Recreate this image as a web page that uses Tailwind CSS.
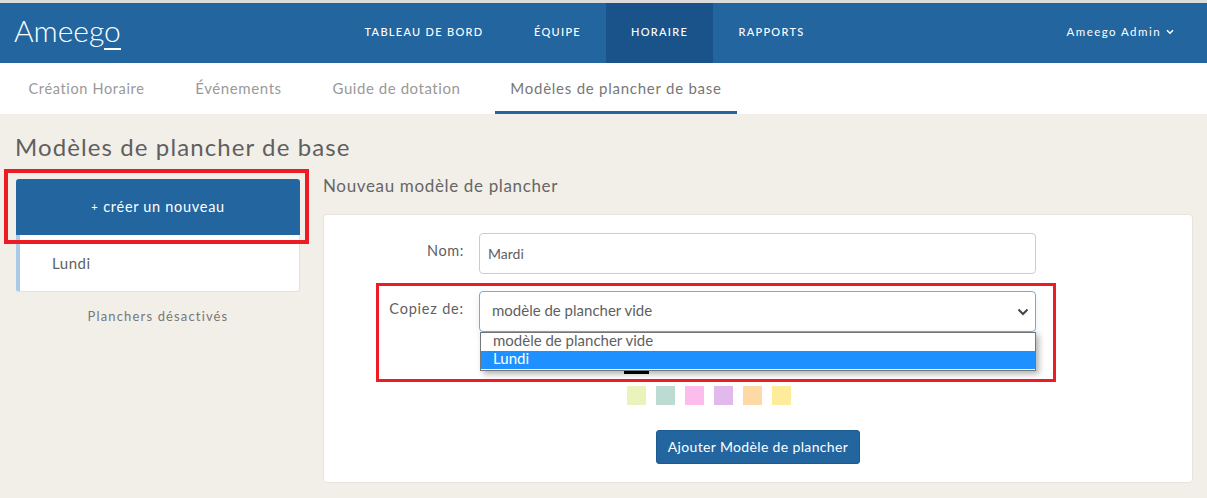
<!DOCTYPE html>
<html lang="fr">
<head>
    <meta charset="UTF-8">
    <title>Ameego</title>
    <script src="https://cdn.jsdelivr.net/npm/@tailwindcss/browser@4"></script>
</head>
<body class="bg-[#f2efe9] font-['Lato','Open_Sans',sans-serif] text-[#5f5f5f]">
<div class="relative h-[498px] w-[1207px] overflow-hidden">
    <!-- Top nav -->
    <div class="h-[3px] bg-[#dcdcdc]"></div>
    <header class="h-[60px] bg-[#23659f] text-white flex items-stretch relative">
        <a class="absolute left-[14px] top-[7px] text-[30px] leading-[40px] font-light">Ameego<span class="absolute right-[0px] top-[38px] h-[2px] w-[17px] bg-white"></span></a>
        <nav class="ml-[339px] flex items-stretch text-[11px] font-medium uppercase tracking-[1.3px]">
            <a class="w-[170px] flex items-center justify-center pb-[2px]">Tableau de bord</a>
            <a class="w-[97px] flex items-center justify-center pb-[2px]">Équipe</a>
            <a class="w-[107px] flex items-center justify-center pb-[2px] bg-[#19538a]">Horaire</a>
            <a class="w-[117px] flex items-center justify-center pb-[2px]">Rapports</a>
        </nav>
        <div class="ml-auto mr-[33px] pb-[2px] flex items-center gap-[5px] text-[11.5px] tracking-[1.45px]">
            Ameego Admin
            <svg width="8" height="6" viewBox="0 0 8 6" fill="none" stroke="white" stroke-width="1.6"><path d="M1 1.2 L4 4.2 L7 1.2"/></svg>
        </div>
    </header>

    <!-- Sub tabs -->
    <div class="h-[51px] bg-white pl-[14px] flex items-stretch text-[#999]">
        <a class="w-[145px] flex items-center justify-center text-[14.5px] tracking-[0.65px]">Création Horaire</a>
        <a class="ml-[21px] w-[117px] flex items-center justify-center text-[15px] tracking-[0.6px]">Événements</a>
        <a class="ml-[21px] w-[157px] flex items-center justify-center text-[15px] tracking-[0.55px]">Guide de dotation</a>
        <a class="ml-[20px] w-[242px] pt-[3px] flex items-center justify-center text-[15px] tracking-[0.75px] text-[#777] border-b-[3px] border-[#23659f]">Modèles de plancher de base</a>
    </div>

    <h1 class="pl-[15px] pt-[18px] text-[24px] leading-[30px] tracking-[1.1px]">Modèles de plancher de base</h1>

    <div class="flex items-start pl-[16px] pr-[14px]">
        <!-- Sidebar -->
        <aside class="w-[284px] mt-[17px] shrink-0">
            <div class="h-[56px] bg-[#23659f] text-white flex items-center justify-center text-[14.5px] tracking-[0.7px] rounded-t-[3px]">
                <span class="text-[11px] mr-[5px]">+</span>créer un nouveau
            </div>
            <div class="h-[57px] bg-white border-b border-r border-[#e6e2da] border-l-[4px] border-l-[#a9cbe8] rounded-b-[3px] pl-[32px] flex items-center text-[15px] tracking-[0.5px]">Lundi</div>
            <p class="mt-[15px] text-center text-[13px] tracking-[1.15px] text-[#777]">Planchers désactivés</p>
        </aside>

        <!-- Main -->
        <main class="ml-[23px] flex-1">
            <h2 class="pt-[13px] text-[17px] leading-[22px] tracking-[0.65px] text-[#666]">Nouveau modèle de plancher</h2>
            <div class="mt-[17px] h-[269px] rounded-[4px] bg-white border border-[#e8e4dc]">
                <form class="pt-[18px]">
                    <div class="flex items-start">
                        <label class="w-[155px] pr-[15px] text-right text-[14.5px] tracking-[0.6px] pt-[7px] shrink-0">Nom:</label>
                        <div class="w-[557px] h-[41px] rounded-[4px] border border-[#ccc] flex items-center pl-[8px] text-[14px]">Mardi</div>
                    </div>
                    <div class="flex items-start mt-[17px]">
                        <label class="w-[155px] pr-[15px] text-right text-[14.5px] tracking-[0.8px] pt-[7px] shrink-0">Copiez de:</label>
                        <div class="relative w-[557px] h-[41px] rounded-[4px] border border-[#66afe9] flex items-center pl-[12px] pb-[2px] text-[15px] shadow-[0_4px_8px_rgba(0,0,0,0.08)]">
                            modèle de plancher vide
                            <svg class="absolute right-[6px] top-[16px]" width="12" height="8" viewBox="0 0 12 8" fill="none" stroke="#444" stroke-width="2"><path d="M1.5 1.5 L6 6 L10.5 1.5"/></svg>
                        </div>
                    </div>
                    <!-- Color swatches -->
                    <div class="mt-[54px] ml-[303px] flex gap-[10px] relative">
                        <span class="absolute left-[-3px] top-[-15px] h-[3px] w-[25px] bg-black"></span>
                        <span class="size-[19px] bg-[#e9f3bb]"></span>
                        <span class="size-[19px] bg-[#bcdcd3]"></span>
                        <span class="size-[19px] bg-[#fdbdec]"></span>
                        <span class="size-[19px] bg-[#e1b9ea]"></span>
                        <span class="size-[19px] bg-[#fdd9a5]"></span>
                        <span class="size-[19px] bg-[#feec9b]"></span>
                    </div>
                    <div class="mt-[25px] ml-[332px]">
                        <button type="button" class="w-[204px] h-[34px] pb-[2px] rounded-[3px] bg-[#23659f] border border-[#1d5a90] text-white text-[14px] tracking-[0.35px]">Ajouter Modèle de plancher</button>
                    </div>
                </form>
            </div>
        </main>
    </div>

    <!-- Open select list -->
    <ul class="absolute left-[480px] top-[332px] w-[556px] h-[39px] bg-white border border-[#767676] text-[15px] leading-[15px] shadow-[3px_3px_6px_rgba(0,0,0,0.3)]">
        <li class="pl-[12px] h-[18px]">modèle de plancher vide</li>
        <li class="pl-[12px] h-[18px] bg-[#1e90ff] text-white">Lundi</li>
    </ul>

    <!-- Red annotations -->
    <div class="absolute left-[4px] top-[169px] w-[305px] h-[75px] border-[4px] border-[#ed1c24]"></div>
    <div class="absolute left-[376px] top-[283px] w-[680px] h-[99px] border-[3px] border-[#ed1c24]"></div>
</div>
</body>
</html>
